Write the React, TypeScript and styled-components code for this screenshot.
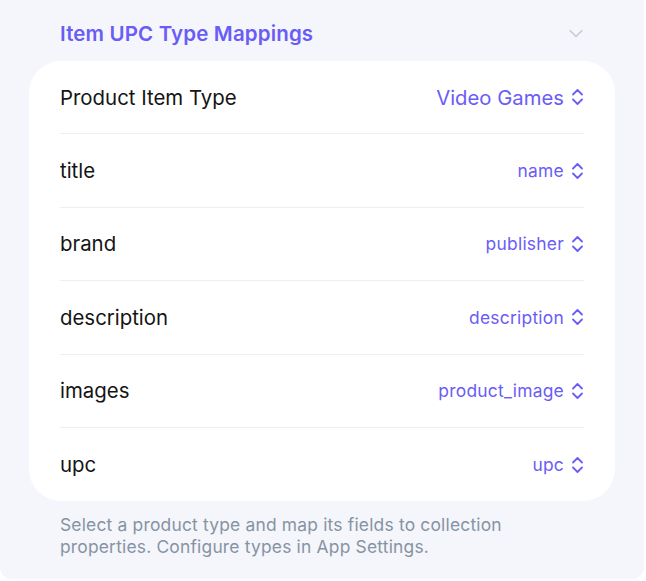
import React from 'react';
import styled, { createGlobalStyle } from 'styled-components';

const GlobalStyle = createGlobalStyle`
  html, body {
    margin: 0;
    padding: 0;
    background: #ffffff;
    font-family: Inter, 'Noto Sans', sans-serif;
    -webkit-font-smoothing: antialiased;
  }
`;

const ACCENT = '#6a5cf6';

// 字段映射数据
const mappings = [
  { label: 'Product Item Type', value: 'Video Games', primary: true },
  { label: 'title', value: 'name' },
  { label: 'brand', value: 'publisher' },
  { label: 'description', value: 'description' },
  { label: 'images', value: 'product_image' },
  { label: 'upc', value: 'upc' },
];

const Panel = styled.div`
  width: 644px;
  height: 579px;
  box-sizing: border-box;
  background: #f4f6fb;
  border-radius: 0 0 12px 12px;
  padding: 0 29px;
  display: flex;
  flex-direction: column;
`;

const Header = styled.div`
  height: 61px;
  display: flex;
  align-items: center;
  justify-content: space-between;
  padding: 6px 32px 0 31px;
  box-sizing: border-box;
`;

const HeaderTitle = styled.div`
  font-size: 20.5px;
  font-weight: 600;
  color: ${ACCENT};
  letter-spacing: 0.15px;
`;

const Card = styled.div`
  background: #ffffff;
  border-radius: 32px;
  padding: 0 31px;
  display: flex;
  flex-direction: column;
`;

const Row = styled.div`
  height: 73.4px;
  display: flex;
  align-items: center;
  justify-content: space-between;
  border-bottom: 1.5px solid #eeeef1;
  box-sizing: border-box;

  &:last-child {
    border-bottom: none;
  }
`;

const Label = styled.div`
  font-size: 20.4px;
  color: #141414;
`;

const Value = styled.div<{ $primary?: boolean }>`
  display: flex;
  align-items: center;
  gap: 7px;
  color: ${ACCENT};
  font-size: ${p => (p.$primary ? '20.3px' : '17.4px')};
  letter-spacing: ${p => (p.$primary ? '0' : '0.25px')};
`;

const Footer = styled.div`
  padding: 13px 31px 0;
  max-width: 500px;
  font-size: 17.4px;
  line-height: 22px;
  color: #8793a3;
  letter-spacing: 0.2px;
`;

const UpDown = () => (
  <svg width="13" height="18" viewBox="0 0 13 18" fill="none" stroke={ACCENT} strokeWidth="1.8" strokeLinecap="round" strokeLinejoin="round">
    <path d="M2 6.5 L6.5 2 L11 6.5" />
    <path d="M2 11.5 L6.5 16 L11 11.5" />
  </svg>
);

const ChevronDown = () => (
  <svg width="14" height="9" viewBox="0 0 14 9" fill="none" stroke="#c3c8d2" strokeWidth="1.4" strokeLinecap="round" strokeLinejoin="round">
    <path d="M1 1.5 L7 7.5 L13 1.5" />
  </svg>
);

export default function App() {
  return (
    <>
      <GlobalStyle />
      <Panel>
        <Header>
          <HeaderTitle>Item UPC Type Mappings</HeaderTitle>
          <ChevronDown />
        </Header>
        <Card>
          {mappings.map(m => (
            <Row key={m.label}>
              <Label>{m.label}</Label>
              <Value $primary={m.primary}>
                {m.value}
                <UpDown />
              </Value>
            </Row>
          ))}
        </Card>
        <Footer>
          Select a product type and map its fields to collection properties. Configure types in App Settings.
        </Footer>
      </Panel>
    </>
  );
}
